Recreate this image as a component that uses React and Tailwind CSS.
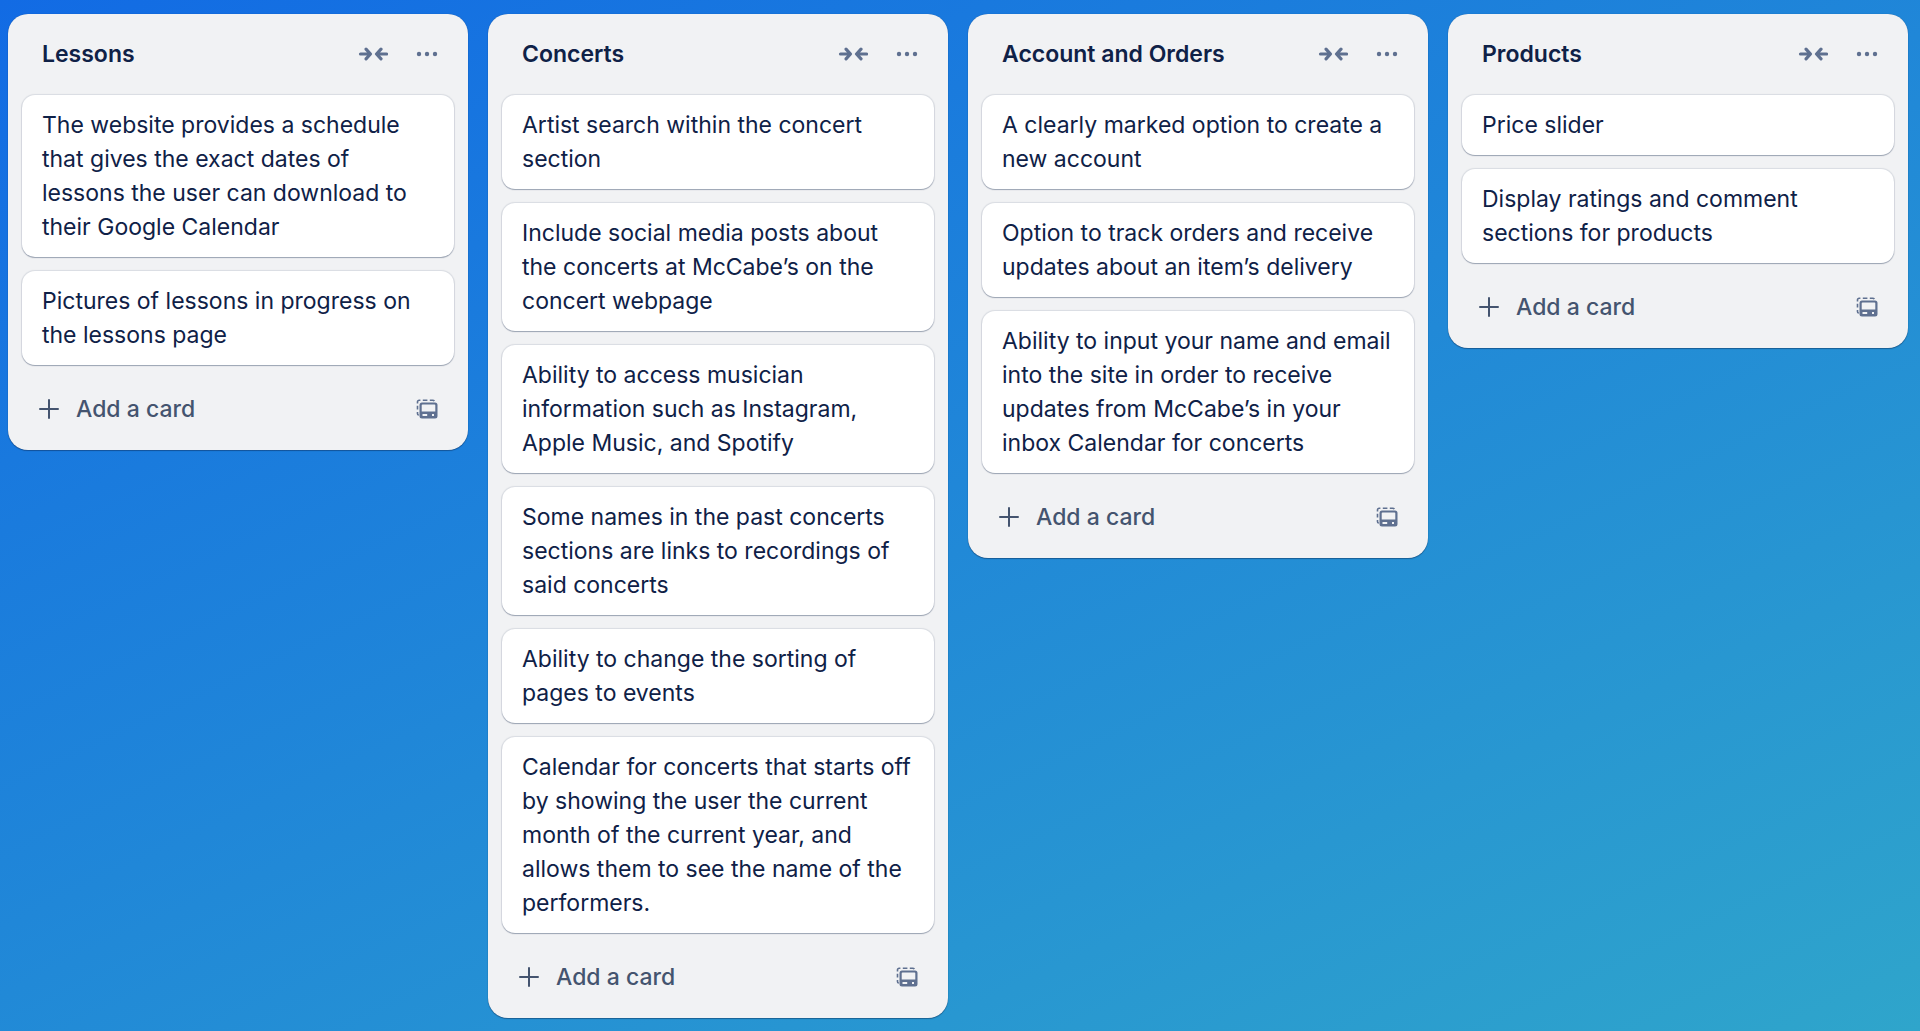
const LISTS = [
  {
    title: "Lessons",
    cards: [
      "The website provides a schedule that gives the exact dates of lessons the user can download to their Google Calendar",
      "Pictures of lessons in progress on the lessons page",
    ],
  },
  {
    title: "Concerts",
    cards: [
      "Artist search within the concert section",
      "Include social media posts about the concerts at McCabe’s on the concert webpage",
      "Ability to access musician information such as Instagram, Apple Music, and Spotify",
      "Some names in the past concerts sections are links to recordings of said concerts",
      "Ability to change the sorting of pages to events",
      "Calendar for concerts that starts off by showing the user the current month of the current year, and allows them to see the name of the performers.",
    ],
  },
  {
    title: "Account and Orders",
    cards: [
      "A clearly marked option to create a new account",
      "Option to track orders and receive updates about an item’s delivery",
      "Ability to input your name and email into the site in order to receive updates from McCabe’s in your inbox Calendar for concerts",
    ],
  },
  {
    title: "Products",
    cards: ["Price slider", "Display ratings and comment sections for products"],
  },
];

function CollapseIcon() {
  return (
    <svg width="30" height="16" viewBox="0 0 30 16" fill="none" stroke="currentColor" strokeWidth="3.2" strokeLinecap="round" strokeLinejoin="round" aria-hidden="true">
      <path d="M2.5 8H12M8 3.2 12.5 8 8 12.8" />
      <path d="M28.5 8H19M23 3.2 18.5 8l4.5 4.8" />
    </svg>
  );
}

function MoreIcon() {
  return (
    <svg width="22" height="6" viewBox="0 0 22 6" fill="currentColor" aria-hidden="true">
      <circle cx="3" cy="3" r="2.2" />
      <circle cx="11" cy="3" r="2.2" />
      <circle cx="19" cy="3" r="2.2" />
    </svg>
  );
}

function PlusIcon() {
  return (
    <svg width="20" height="20" viewBox="0 0 20 20" fill="none" stroke="currentColor" strokeWidth="2" strokeLinecap="round" aria-hidden="true">
      <path d="M1 10h18M10 1v18" />
    </svg>
  );
}

function TemplateIcon() {
  return (
    <svg width="22" height="20" viewBox="0 0 22 20" aria-hidden="true">
      <path d="M1.5 4.6V3A1.7 1.7 0 0 1 3.2 1.2H4.4M6.8 1.2h4.6M13.8 1.2h2.8q1.2 0 1.8.8M1.5 6.800v3.800M1.500 13v1.800q0 1 1.200 1.400" fill="none" stroke="currentColor" strokeWidth="1.6" />
      <path
        fill="currentColor"
        fillRule="evenodd"
        d="M6 3.500h13a2.500 2.500 0 0 1 2.500 2.500v11a2.500 2.500 0 0 1-2.500 2.500H6A2.500 2.500 0 0 1 3.500 17V6A2.500 2.500 0 0 1 6 3.500ZM6.500 5.500a.8.8 0 0 0-.8.8v6.200h13.600V6.300a.8.8 0 0 0-.8-.8ZM6.500 15v2h4.700v-2ZM16 15v2h2v-2Z"
      />
    </svg>
  );
}

function List({ title, cards }) {
  return (
    <section aria-label={title} className="rounded-[20px] bg-[#f1f2f4] px-3.5 pt-[13px] pb-3.5 shadow-[0_1px_1px_rgba(9,30,66,0.4),0_0_1px_rgba(9,30,66,0.4)]">
      <header className="flex items-center">
        <h2 className="min-w-0 flex-1 pl-5 text-[23px] leading-7 font-semibold">{title}</h2>
        <button type="button" aria-label={`Collapse ${title}`} className="grid size-[54px] place-items-center text-[#5f7090]">
          <CollapseIcon />
        </button>
        <button type="button" aria-label={`${title} actions`} className="grid size-[54px] place-items-center text-[#5f7090]">
          <MoreIcon />
        </button>
      </header>
      <ul className="mt-3.5 flex flex-col gap-3.5">
        {cards.map((text) => (
          <li key={text} className="rounded-[13px] bg-white px-5 py-[13px] text-[23px] leading-[34px] shadow-[0_1px_1px_rgba(9,30,66,0.3),0_0_1px_1px_rgba(9,30,66,0.1)]">
            {text}
          </li>
        ))}
      </ul>
      <footer className="mt-[17px] flex items-center">
        <button type="button" className="flex h-[54px] flex-1 items-center gap-[17px] pl-[17px] text-left text-[23px] font-medium text-[#44546f]">
          <PlusIcon />
          Add a card
        </button>
        <button type="button" aria-label="Create from template" className="grid size-[54px] place-items-center text-[#5f7090]">
          <TemplateIcon />
        </button>
      </footer>
    </section>
  );
}

export default function App() {
  return (
    <main className="grid min-h-screen grid-cols-4 items-start gap-5 bg-linear-[155deg,#126be4,#2fa5cb] pt-3.5 pr-3 pl-2 font-['Inter',sans-serif] text-[#0f2147]">
      {LISTS.map((list) => (
        <List key={list.title} {...list} />
      ))}
    </main>
  );
}
